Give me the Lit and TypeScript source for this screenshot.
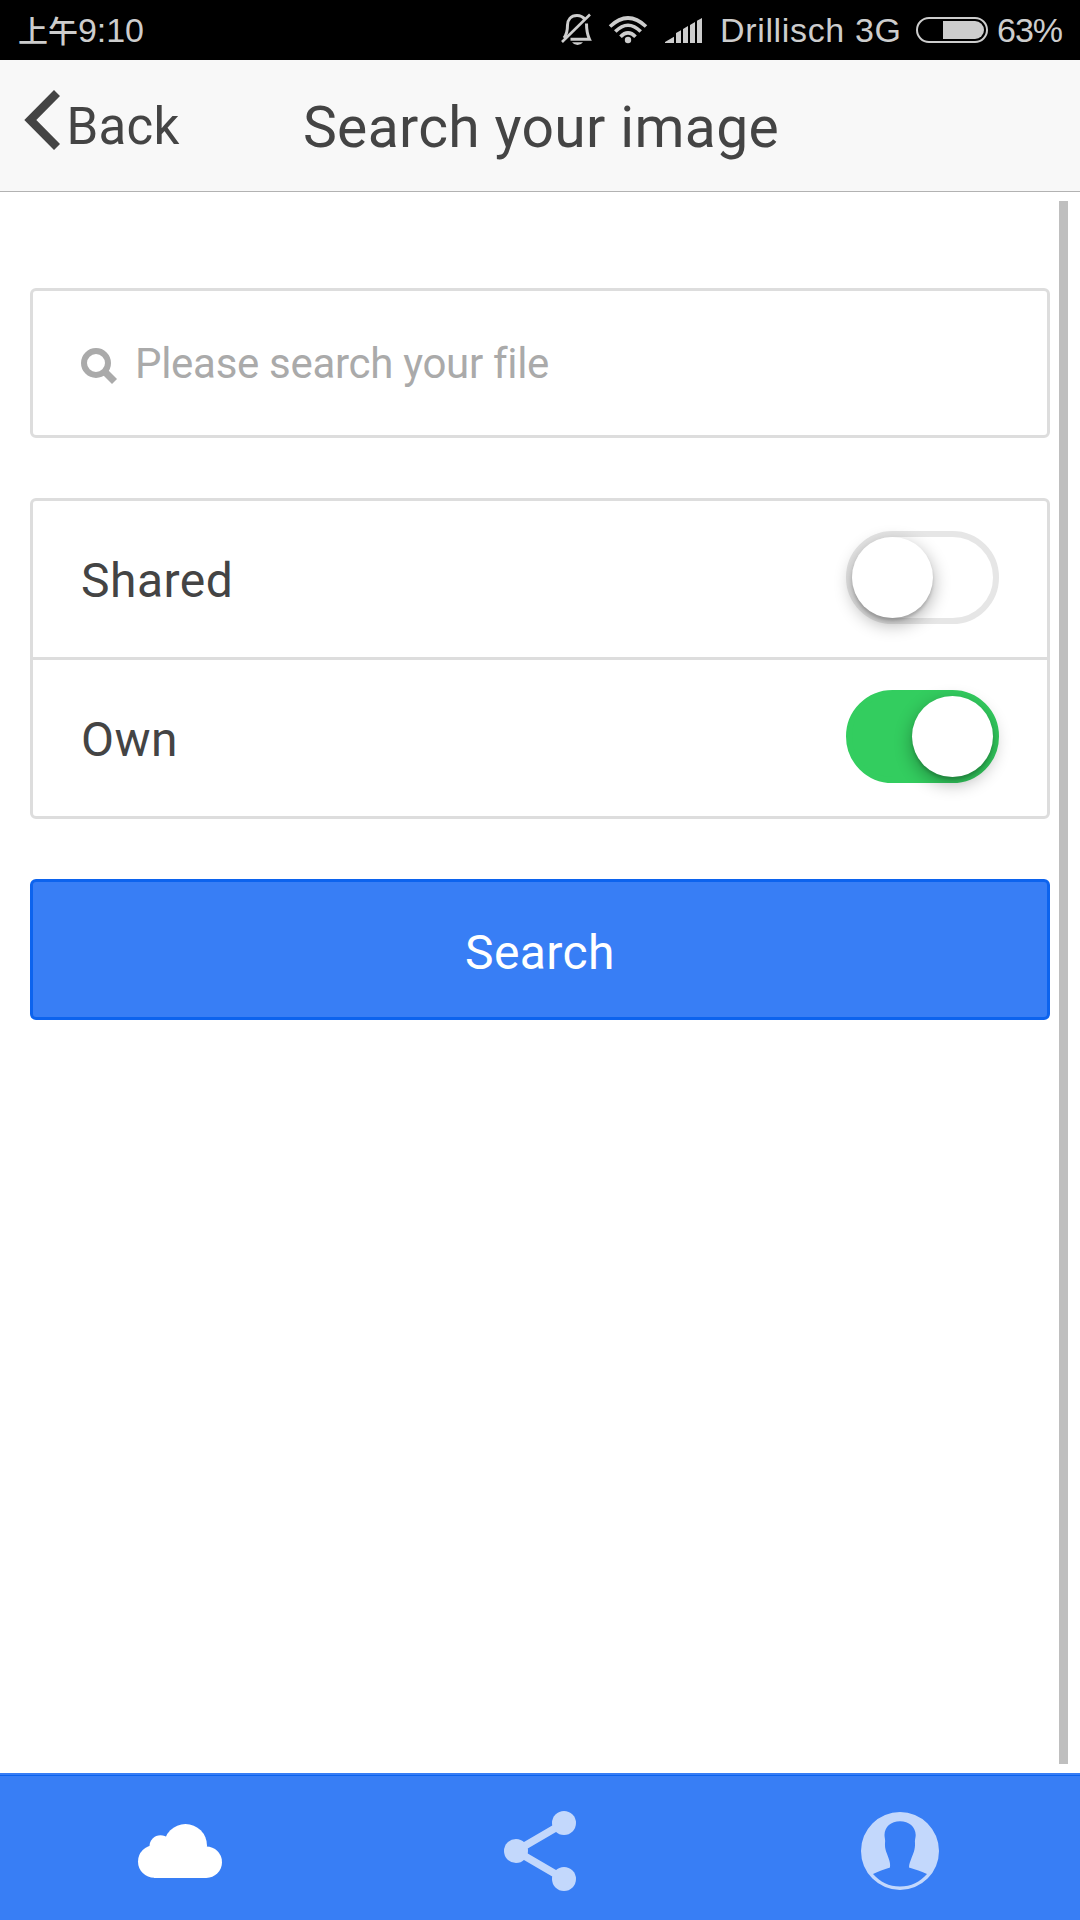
import { LitElement, html, css, svg } from "lit";
import { customElement, property, state } from "lit/decorators.js";

@customElement("status-bar")
class StatusBar extends LitElement {
  static styles = css`
    :host {
      display: flex;
      align-items: center;
      justify-content: space-between;
      box-sizing: border-box;
      height: 60px;
      padding: 0 18px;
      background: #000;
      color: #cdcdcd;
      font-family: "Liberation Sans", "Noto Sans CJK SC", sans-serif;
      font-size: 34px;
      line-height: 60px;
      white-space: nowrap;
    }
    .time {
      display: flex;
    }
    .period {
      font-family: "Noto Sans CJK SC", sans-serif;
      font-size: 30px;
      font-weight: 500;
      line-height: 57px;
    }
    .clock {
      line-height: 59px;
      letter-spacing: -0.1px;
    }
    .right {
      display: flex;
      align-items: center;
    }
    .carrier {
      width: 196px;
      letter-spacing: 0.65px;
    }
    .icons {
      display: block;
      width: 144px;
      height: 60px;
      margin-right: 16px;
    }
    .battery {
      display: block;
      width: 72px;
      height: 60px;
      margin-right: 9px;
    }
    .percent {
      width: 65px;
      letter-spacing: -1px;
    }
  `;
  render() {
    return html`
      <div class="time"><span class="period">上午</span><span class="clock">9:10</span></div>
      <div class="right">
        <svg class="icons" viewBox="560 0 144 60" fill="none">
          <g stroke="#cdcdcd">
            <path d="M585 19.500Q582 15.500 577 15.500C570.500 15.500 567.700 20 567.500 25C567.500 31 567 34 564 38" stroke-width="3" />
            <path d="M562 42L590 14.500" stroke-width="2.600" />
            <path d="M586.500 23.500C586.500 31 587 34 589.500 39.300H570.500" stroke-width="3" />
          </g>
          <path d="M572 42.200H583Q581 45 577.500 45Q574 45 572 42.200Z" fill="#cdcdcd" />
          <g stroke="#cdcdcd" stroke-width="3.600">
            <path d="M610 26.500Q628 9.500 646 26.500" />
            <path d="M615.300 31.600Q628 18.800 640.700 31.600" />
            <path d="M620.500 36.800Q628 29 635.500 36.800" />
          </g>
          <circle cx="628" cy="40" r="3.200" fill="#cdcdcd" />
          <path
            fill="#cdcdcd"
            d="M665 43V42L674 36.800V43ZM676 43V33L681 30.200V43ZM683 43V29L688 26V43ZM690 43V25L695 22V43ZM697 43V20.800L702 18V43Z"
          />
        </svg>
        <span class="carrier">Drillisch 3G</span>
        <svg class="battery" viewBox="916 0 72 60">
          <rect x="917" y="18" width="70" height="24" rx="12" fill="none" stroke="#cdcdcd" stroke-width="2" />
          <path d="M943 21H975A9 9 0 0 1 975 39H943Z" fill="#cdcdcd" />
        </svg>
        <span class="percent">63%</span>
      </div>
    `;
  }
}

@customElement("nav-header")
class NavHeader extends LitElement {
  static styles = css`
    :host {
      display: grid;
      grid-template-columns: 1fr auto 1fr;
      align-items: center;
      box-sizing: border-box;
      height: 132px;
      border-bottom: 1px solid #b2b2b2;
      background: #f8f8f8;
      color: #444;
      font-family: Roboto, sans-serif;
      white-space: nowrap;
    }
    .back {
      display: flex;
      align-items: center;
      padding-left: 24px;
      font-size: 51px;
      line-height: 60px;
      letter-spacing: 0.3px;
    }
    .back-label {
      padding-top: 2px;
    }
    .chevron {
      display: block;
      width: 36px;
      height: 60px;
      margin: 0 6.500px 12px 0;
    }
    .title {
      font-size: 57px;
      line-height: 68px;
      letter-spacing: 0.35px;
      padding: 5px 0 0 2px;
    }
  `;
  render() {
    return html`
      <div class="back">
        <svg class="chevron" viewBox="24 90 36 60">
          <path d="M54 90L60 96L36.300 120L60 144L54 150L24.300 120Z" fill="#444" />
        </svg>
        <span class="back-label">Back</span>
      </div>
      <div class="title">Search your image</div>
    `;
  }
}

@customElement("toggle-row")
class ToggleRow extends LitElement {
  @property() label = "";
  @property({ type: Boolean, reflect: true }) checked = false;

  static styles = css`
    :host {
      display: flex;
      align-items: center;
      justify-content: space-between;
      box-sizing: border-box;
      height: 156px;
      padding: 0 48px;
      color: #444;
      font-size: 48px;
      letter-spacing: 0.5px;
    }
    .label {
      line-height: 60px;
      padding-top: 3px;
    }
    .track {
      display: flex;
      box-sizing: border-box;
      width: 153px;
      height: 93px;
      margin-bottom: 3px;
      border: 6px solid #e6e6e6;
      border-radius: 60px;
      background: #fff;
    }
    .handle {
      width: 81px;
      height: 81px;
      border-radius: 50%;
      background: #fff;
      box-shadow: 0 6px 18px rgba(0, 0, 0, 0.33), 0 3px 3px rgba(0, 0, 0, 0.15);
    }
    :host([checked]) .track {
      justify-content: flex-end;
      border-color: #33cd5f;
      background: #33cd5f;
    }
  `;
  render() {
    return html`
      <span class="label">${this.label}</span>
      <div class="track" @click=${() => (this.checked = !this.checked)}>
        <div class="handle"></div>
      </div>
    `;
  }
}

const cloud = svg`
  <circle cx="154.300" cy="1861.500" r="16.300" />
  <circle cx="160.500" cy="1846.200" r="11" />
  <circle cx="185.500" cy="1845.500" r="21.500" />
  <circle cx="206.300" cy="1862.200" r="15.700" />
  <path d="M154 1848H206V1878H154Z" />
`;
const share = svg`
  <path d="M564 1823L516 1851L564 1879" fill="none" stroke="currentColor" stroke-width="7.500" />
  <circle cx="516" cy="1851" r="12" /><circle cx="564" cy="1823" r="12" /><circle cx="564" cy="1879" r="12" />
`;
const person = svg`
  <path
    fill-rule="evenodd"
    d="M900 1812A39 39 0 1 1 900 1890A39 39 0 1 1 900 1812ZM900 1821.300C891 1821.300 884.500 1827 884.500 1835C884.500 1838 885.600 1840 885 1843C884.500 1850 887.500 1854 888.500 1858C890 1862 890.300 1864 890 1867.500C884 1869.700 878 1871.300 873 1874C880 1882 889 1886.500 900 1886.500C911 1886.500 920 1882 927 1874C922 1871.500 915 1869.500 909 1867.500C909 1864 910.300 1861.500 911.500 1858C913 1854 915.300 1850 915 1843C914.500 1840 915.700 1838 915.700 1835C915.500 1827 909 1821.300 900 1821.300Z"
  />
`;

@customElement("tab-bar")
class TabBar extends LitElement {
  @state() active = 0;

  static styles = css`
    :host {
      display: flex;
      box-sizing: border-box;
      height: 147px;
      border-top: 2px solid #387ef5;
      background: #387ef5;
    }
    .tab {
      display: flex;
      flex: 1;
      align-items: center;
      justify-content: center;
      border-top: 1px solid #0c63ee;
      color: #c3d8fc;
    }
    .tab.active {
      color: #fff;
    }
    .icon {
      display: block;
      width: 90px;
      height: 90px;
      margin-top: 6px;
      fill: currentColor;
    }
  `;
  render() {
    const tabs = [
      { art: cloud, x: 135 },
      { art: share, x: 495 },
      { art: person, x: 855 },
    ];
    return tabs.map(
      (t, i) => html`
        <div class="tab ${i === this.active ? "active" : ""}" @click=${() => (this.active = i)}>
          <svg class="icon" viewBox="${t.x} 1806 90 90">${t.art}</svg>
        </div>
      `
    );
  }
}

@customElement("app-root")
class AppRoot extends LitElement {
  static styles = css`
    :host {
      display: flex;
      flex-direction: column;
      width: 1080px;
      height: 1920px;
      background: #fff;
      font-family: Roboto, sans-serif;
      overflow: hidden;
    }
    .body {
      display: flex;
      flex: 1;
    }
    .content {
      flex: 1;
      padding: 96px 9px 0 30px;
    }
    .search-box {
      display: flex;
      align-items: center;
      box-sizing: border-box;
      height: 150px;
      padding: 0 48px;
      border: 3px solid #ddd;
      border-radius: 6px;
      color: #aaa;
      font-size: 42px;
      letter-spacing: -0.3px;
    }
    .glass {
      display: block;
      width: 36px;
      height: 36px;
      margin: 6px 18px 0 0;
    }
    .list {
      margin: 60px 0;
      border: 3px solid #ddd;
      border-radius: 6px;
    }
    .divider {
      height: 3px;
      background: #ddd;
    }
    .submit {
      display: flex;
      align-items: center;
      justify-content: center;
      box-sizing: border-box;
      height: 141px;
      padding-top: 6px;
      border: 3px solid #0c63ee;
      border-radius: 6px;
      background: #387ef5;
      color: #fff;
      font-size: 48px;
      letter-spacing: 0.4px;
    }
    .scrollbar {
      width: 9px;
      margin: 9px 12px 9px 0;
      background: #bfbfbf;
    }
  `;
  render() {
    return html`
      <status-bar></status-bar>
      <nav-header></nav-header>
      <div class="body">
        <div class="content">
          <div class="search-box">
            <svg class="glass" viewBox="0 0 36 36">
              <circle cx="15" cy="15" r="12" fill="none" stroke="#aaa" stroke-width="6" />
              <path d="M22 27L27 22L36 31L31 36Z" fill="#aaa" />
            </svg>
            <span>Please search your file</span>
          </div>
          <div class="list">
            <toggle-row label="Shared"></toggle-row>
            <div class="divider"></div>
            <toggle-row label="Own" checked></toggle-row>
          </div>
          <div class="submit">Search</div>
        </div>
        <div class="scrollbar"></div>
      </div>
      <tab-bar></tab-bar>
    `;
  }
}
